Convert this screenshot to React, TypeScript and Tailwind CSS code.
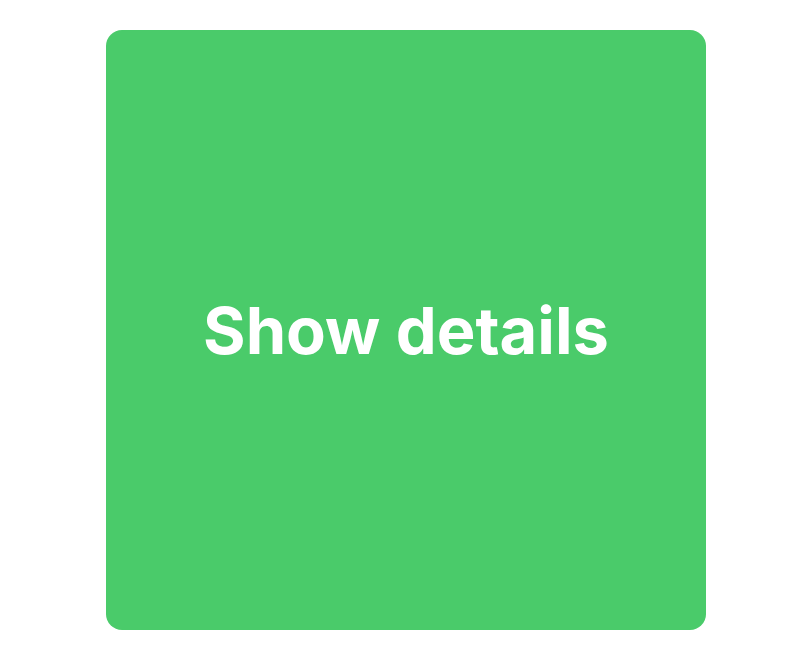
export default function App() {
  return (
    <div className="flex h-[660px] w-full items-center justify-center bg-white">
      <div className="flex h-[600px] w-[600px] items-center justify-center rounded-2xl bg-[#4acb6a]">
        <span className="font-['Inter',sans-serif] text-[65px] font-bold leading-none text-white">
          Show details
        </span>
      </div>
    </div>
  );
}
